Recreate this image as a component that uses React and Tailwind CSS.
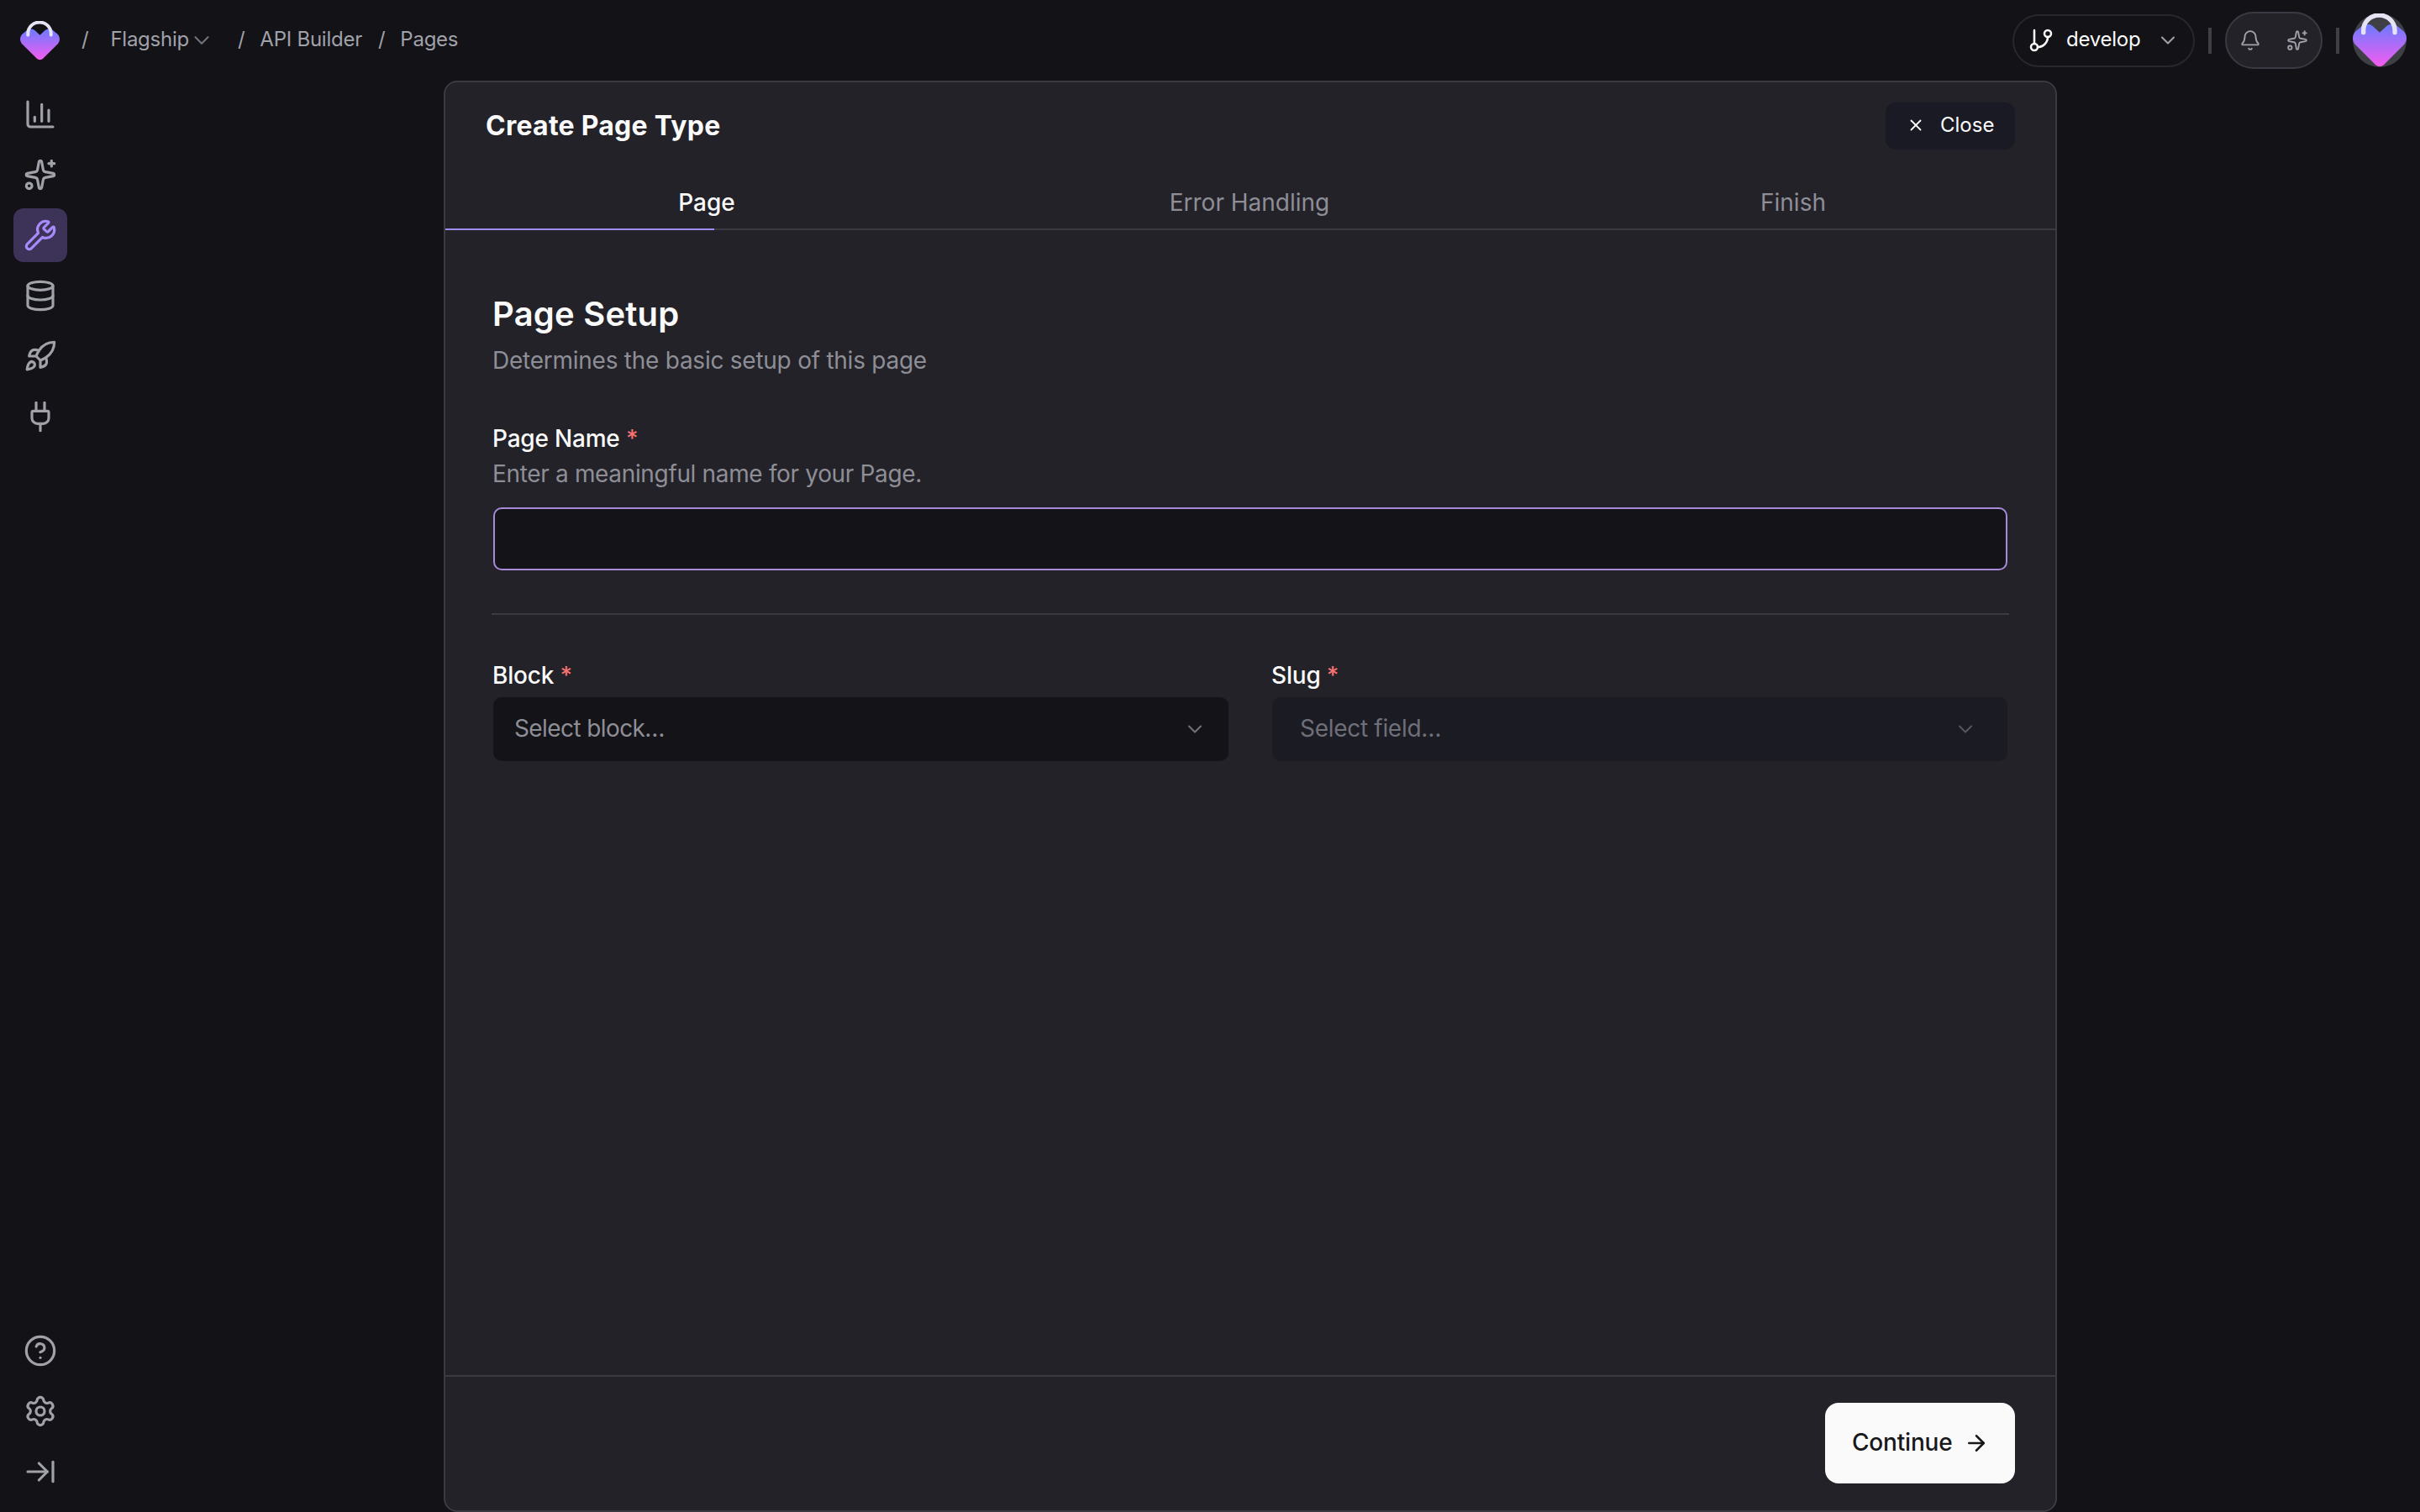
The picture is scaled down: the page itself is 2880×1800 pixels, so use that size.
import {
  ArrowRight,
  ArrowRightToLine,
  Bell,
  ChartColumn,
  ChevronDown,
  CircleHelp,
  Database,
  GitBranch,
  Plug,
  Rocket,
  Settings,
  Sparkles,
  Wrench,
  X,
} from 'lucide-react'

function Logo({ size, id }) {
  return (
    <svg width={size} height={size} viewBox="0 0 48 48" fill="none">
      <defs>
        <linearGradient id={id} x1="0" y1="10" x2="0" y2="47" gradientUnits="userSpaceOnUse">
          <stop offset="0" stopColor="#6d7bff" />
          <stop offset="1" stopColor="#f45cf0" />
        </linearGradient>
      </defs>
      <path
        d="M24 17L18 11.5C15 9 11 9 8 11.5L3 15.5C-0.5 18.5 -1 24 2 27.5L20 45.5C22.5 47.8 25.5 47.8 28 45.5L46 27.5C49 24 48.5 18.5 45 15.5L40 11.5C37 9 33 9 30 11.5Z"
        fill={`url(#${id})`}
      />
      <path
        d="M9.5 17V15A14 13.5 0 0 1 37.5 15V17"
        stroke="#e6e4f4"
        strokeWidth="4"
        strokeLinecap="round"
      />
    </svg>
  )
}

function Label({ children }) {
  return (
    <div className="text-[28px] leading-[32px] font-medium tracking-[-0.2px] text-[#fafafa] pl-px">
      {children} <span className="text-[#f87171]">*</span>
    </div>
  )
}

function SideIcon({ icon: Icon, active }) {
  return (
    <div
      className={`w-16 h-16 rounded-xl flex items-center justify-center ${
        active ? 'bg-[#3d3358] text-[#a78bfa]' : 'text-[#a1a1aa]'
      }`}
    >
      <Icon size={40} strokeWidth={1.9} />
    </div>
  )
}

export default function App() {
  return (
    <div className="h-screen flex flex-col overflow-hidden bg-[#121217] font-['Inter',sans-serif]">
      {/* Top bar */}
      <div className="h-[96px] shrink-0 flex items-center text-[24px] tracking-[-0.25px] text-[#a1a1aa]">
        <div className="ml-6 w-[47px] h-[47px]">
          <Logo size={47} id="logo-a" />
        </div>
        <span className="ml-[26px] -mt-[3px]">/</span>
        <span className="ml-[26px] -mt-[3px]">Flagship</span>
        <ChevronDown size={30} strokeWidth={1.75} className="text-[#71717a]" />
        <span className="ml-[28px] -mt-[3px]">/</span>
        <span className="ml-[18px] -mt-[3px]">API Builder</span>
        <span className="ml-[19px] -mt-[3px]">/</span>
        <span className="ml-[18px] -mt-[3px]">Pages</span>

        <div className="ml-auto flex items-center">
          <div className="w-[217px] h-[63px] rounded-full border-2 border-[#27272e] flex items-center pl-[16px] text-[#fafafa]">
            <GitBranch size={32} strokeWidth={1.9} />
            <span className="ml-[14px] -mt-[3px]">develop</span>
            <ChevronDown size={28} strokeWidth={1.75} className="ml-[19px] text-[#a1a1aa]" />
          </div>
          <div className="ml-4 w-1 h-[31px] bg-[#3f3f46]" />
          <div className="ml-4 w-[116px] h-[68px] rounded-full border-2 border-[#3a3a42] bg-[#232229] flex items-center justify-between px-[15px]">
            <Bell size={26} strokeWidth={1.75} />
            <Sparkles size={26} strokeWidth={1.75} />
          </div>
          <div className="ml-4 w-1 h-[31px] bg-[#3f3f46]" />
          <div className="ml-4 mr-4 w-16 h-16 rounded-full bg-[#3f3f46]">
            <Logo size={64} id="logo-b" />
          </div>
        </div>
      </div>

      <div className="flex-1 min-h-0 flex">
        {/* Sidebar */}
        <div className="w-[96px] shrink-0 flex flex-col justify-between items-center pt-2 pb-4">
          <div className="flex flex-col gap-2">
            <SideIcon icon={ChartColumn} />
            <SideIcon icon={Sparkles} />
            <SideIcon icon={Wrench} active />
            <SideIcon icon={Database} />
            <SideIcon icon={Rocket} />
            <SideIcon icon={Plug} />
          </div>
          <div className="flex flex-col gap-2">
            <SideIcon icon={CircleHelp} />
            <SideIcon icon={Settings} />
            <SideIcon icon={ArrowRightToLine} />
          </div>
        </div>

        {/* Modal */}
        <div className="flex-1 min-w-0 flex justify-center">
          <div className="w-[1920px] h-full flex flex-col rounded-2xl border-2 border-[#3a3a42] bg-[#232229]">
            <div className="border-b-2 border-[#3a3a42] relative">
              <div className="flex items-center justify-between pt-6 pl-[48px] pr-[48px]">
                <h1 className="text-[32px] leading-10 font-bold tracking-[0.25px] text-[#fafafa]">Create Page Type</h1>
                <button className="w-[154px] h-14 rounded-xl bg-[#1a1a24] flex items-center pl-[25px] pb-[2px] text-[24px] text-[#fafafa]">
                  <X size={22} strokeWidth={2} />
                  <span className="ml-[18px]">Close</span>
                </button>
              </div>
              <div className="mt-[31px] h-[63px] grid grid-cols-[622px_670px_624px] items-center text-center text-[28px] text-[#8e8e96]">
                <span className="text-[#fafafa] font-medium">Page</span>
                <span>Error Handling</span>
                <span>Finish</span>
              </div>
              <div className="absolute left-0 -bottom-[2px] w-[320px] h-[2px] bg-[#a08cf5]" />
            </div>

            <div className="flex-1 min-h-0 pt-[76px] pl-[55px] pr-[55px]">
              <h2 className="text-[40px] leading-[48px] font-semibold tracking-[0.2px] text-[#fafafa] pl-px">Page Setup</h2>
              <p className="mt-[13px] text-[28px] leading-9 tracking-[-0.25px] text-[#8e8e96] pl-px">
                Determines the basic setup of this page
              </p>

              <div className="mt-[59px]">
                <Label>Page Name</Label>
                <p className="mt-[10px] text-[28px] leading-8 tracking-[-0.34px] text-[#8e8e96] pl-px">
                  Enter a meaningful name for your Page.
                </p>
                <div className="mx-[2px] mt-6 h-[75px] rounded-[10px] border-2 border-[#a78bda] bg-[#131318]" />
              </div>

              <div className="mt-[51px] h-[2px] bg-[#3a3a42]" />

              <div className="mt-[56px] mx-[2px] grid grid-cols-2 gap-[52px]">
                <div>
                  <div className="-ml-[2px]">
                    <Label>Block</Label>
                  </div>
                  <div className="mt-[10px] h-[76px] rounded-[10px] bg-[#131318] flex items-center justify-between pl-[25px] pr-[26px] pb-[2px] text-[28px] tracking-[-0.6px] text-[#8e8e96]">
                    <span>Select block…</span>
                    <ChevronDown size={28} strokeWidth={1.75} className="text-[#71717a] mt-[2px]" />
                  </div>
                </div>
                <div>
                  <div className="-ml-[2px]">
                    <Label>Slug</Label>
                  </div>
                  <div className="mt-[10px] h-[76px] rounded-[10px] bg-[#1b1b23] flex items-center justify-between pl-[33px] pr-[36px] pb-[2px] text-[28px] tracking-[-0.3px] text-[#6f6f78]">
                    <span>Select field…</span>
                    <ChevronDown size={28} strokeWidth={1.75} className="text-[#56565e] mt-[2px]" />
                  </div>
                </div>
              </div>
            </div>

            <div className="h-[161px] shrink-0 border-t-2 border-[#3a3a42] flex justify-end pt-[31px] pr-[48px]">
              <button className="w-[226px] h-[96px] rounded-2xl bg-[#fafafa] flex items-center pl-[32px] pb-[2px] text-[28px] font-medium tracking-[-0.2px] text-[#18181b]">
                <span>Continue</span>
                <ArrowRight size={30} strokeWidth={2} className="ml-[14px] mt-[2px]" />
              </button>
            </div>
          </div>
        </div>
      </div>
    </div>
  )
}
